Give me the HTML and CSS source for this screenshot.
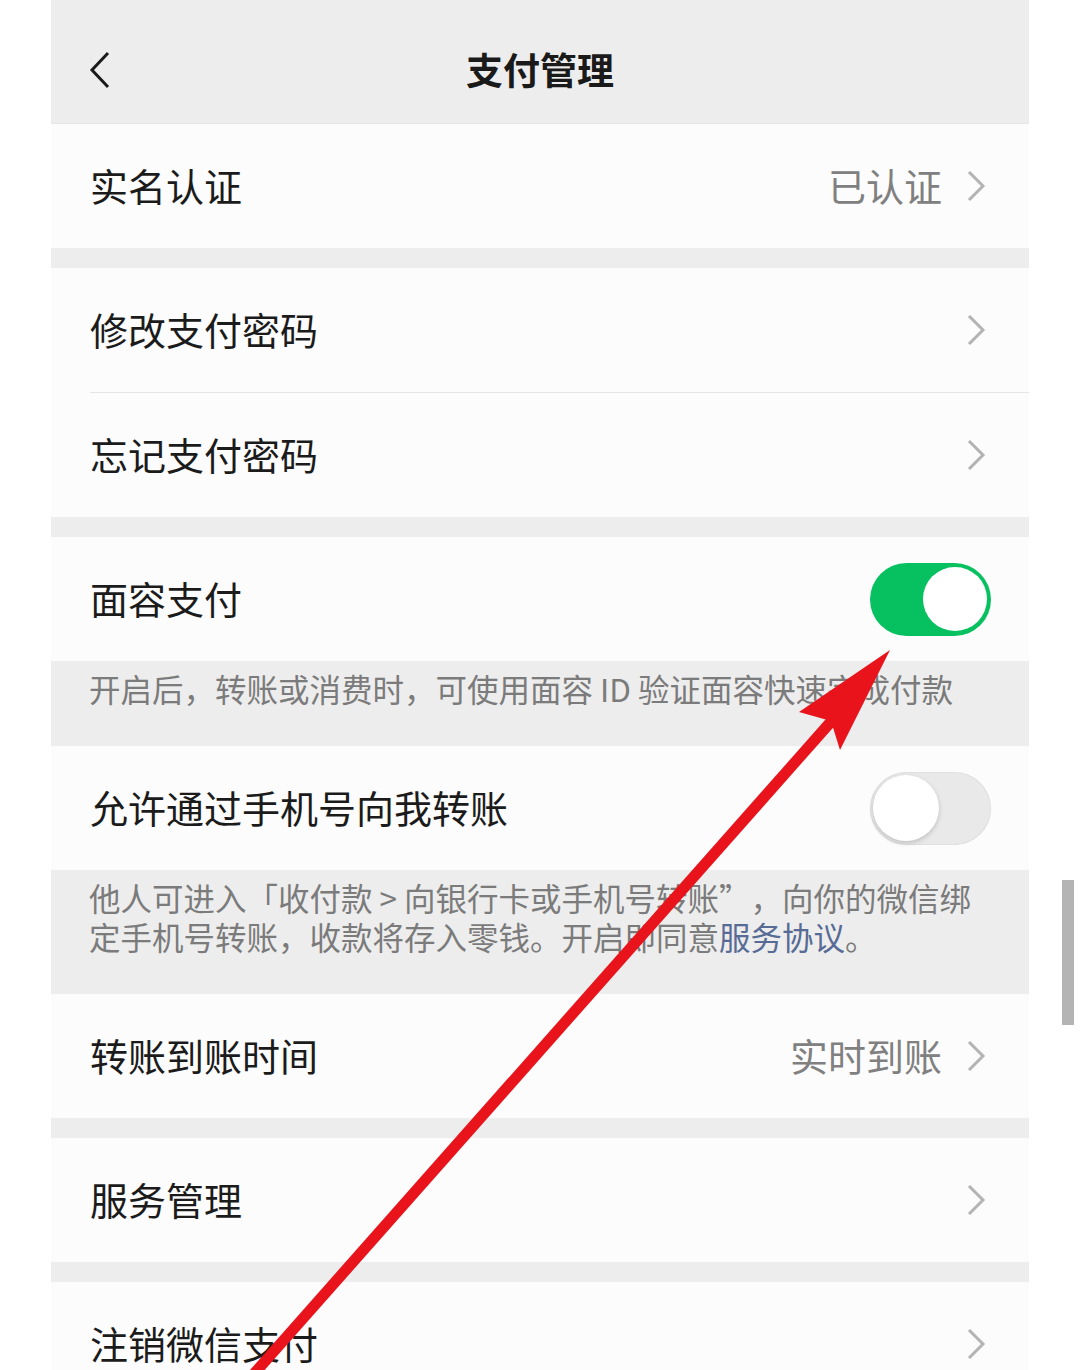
FILE: index.html
```html
<!doctype html>
<html lang="zh-CN">
<head>
  <meta charset="utf-8">
  <title>支付管理</title>
  <link rel="stylesheet" href="styles.css">
</head>
<body>
<div class="page">
  <div class="screen">
    <header class="navBar">
      <svg class="backIcon" width="22" height="38" viewBox="0 0 22 38">
        <polyline points="19,2 3,19 19,36" fill="none" stroke="#1a1a1a" stroke-width="3"/>
      </svg>
      <h1 class="navTitle">支付管理</h1>
      <span></span>
    </header>

    <section class="group">
      <div class="cell">
        <span class="cellLabel">实名认证</span>
        <span class="cellValue">已认证</span>
        <svg class="arrowIcon" width="19" height="32" viewBox="0 0 19 32">
          <polyline points="2,2 16,16 2,30" fill="none" stroke="#b3b3b3" stroke-width="3"/>
        </svg>
      </div>
    </section>

    <section class="group">
      <div class="cell">
        <span class="cellLabel">修改支付密码</span>
        <svg class="arrowIcon" width="19" height="32" viewBox="0 0 19 32">
          <polyline points="2,2 16,16 2,30" fill="none" stroke="#b3b3b3" stroke-width="3"/>
        </svg>
      </div>
      <div class="divider"></div>
      <div class="cell">
        <span class="cellLabel">忘记支付密码</span>
        <svg class="arrowIcon" width="19" height="32" viewBox="0 0 19 32">
          <polyline points="2,2 16,16 2,30" fill="none" stroke="#b3b3b3" stroke-width="3"/>
        </svg>
      </div>
    </section>

    <section class="group">
      <div class="cell">
        <span class="cellLabel">面容支付</span>
        <span class="switch switchOn"><span class="knob"></span></span>
      </div>
      <p class="tips">开启后，转账或消费时，可使用面容 ID 验证面容快速完成付款</p>
      <div class="cell">
        <span class="cellLabel">允许通过手机号向我转账</span>
        <span class="switch"><span class="knob"></span></span>
      </div>
      <p class="tips">他人可进入「收付款 &gt; 向银行卡或手机号转账”，向你的微信绑定手机号转账，收款将存入零钱。开启即同意<a class="link">服务协议</a>。</p>
      <div class="cell">
        <span class="cellLabel">转账到账时间</span>
        <span class="cellValue">实时到账</span>
        <svg class="arrowIcon" width="19" height="32" viewBox="0 0 19 32">
          <polyline points="2,2 16,16 2,30" fill="none" stroke="#b3b3b3" stroke-width="3"/>
        </svg>
      </div>
    </section>

    <section class="group">
      <div class="cell">
        <span class="cellLabel">服务管理</span>
        <svg class="arrowIcon" width="19" height="32" viewBox="0 0 19 32">
          <polyline points="2,2 16,16 2,30" fill="none" stroke="#b3b3b3" stroke-width="3"/>
        </svg>
      </div>
    </section>

    <section class="group">
      <div class="cell">
        <span class="cellLabel">注销微信支付</span>
        <svg class="arrowIcon" width="19" height="32" viewBox="0 0 19 32">
          <polyline points="2,2 16,16 2,30" fill="none" stroke="#b3b3b3" stroke-width="3"/>
        </svg>
      </div>
    </section>
  </div>

  <div class="scrollThumb"></div>

  <!-- red pointer drawn over the page -->
  <svg class="pointer" width="1080" height="1370" viewBox="0 0 1080 1370">
    <line x1="252" y1="1376" x2="836" y2="716" stroke="#e8131b" stroke-width="11"/>
    <polygon points="890,650 799,712 831,721 840,750" fill="#e8131b"/>
  </svg>
</div>
</body>
</html>
```

FILE: styles.css
```css
html, body {
  margin: 0;
  background: #fff;
}

body {
  font-family: "Noto Sans CJK SC", "Noto Sans", sans-serif;
  color: #1b1b1b;
  text-spacing-trim: space-all;
}

.page {
  position: relative;
  width: 1080px;
  height: 1370px;
  overflow: hidden;
}

.screen {
  width: 978px;
  margin-left: 51px;
  background: #ededed;
  min-height: 1370px;
}

.navBar {
  height: 124px;
  display: grid;
  grid-template-columns: 1fr auto 1fr;
  align-items: center;
  padding: 16px 38px 0;
  border-bottom: 1px solid #e6e6e6;
  box-sizing: border-box;
}

.backIcon {
  display: block;
}

.navTitle {
  margin: 0;
  font-size: 37px;
  font-weight: 700;
  color: #1a1a1a;
  line-height: 1;
}

.group {
  background: #fcfcfc;
}

.group + .group {
  margin-top: 20px;
}

.cell {
  height: 124px;
  display: flex;
  align-items: center;
  padding-left: 39px;
  padding-right: 38px;
  box-sizing: border-box;
}

.cellLabel {
  flex: 1;
  font-size: 38px;
  line-height: 1;
  padding-bottom: 3px;
}

.cellValue {
  font-size: 38px;
  line-height: 1;
  color: #808080;
  margin-right: 25px;
  padding-bottom: 3px;
}

.arrowIcon {
  display: block;
  margin-right: 5px;
}

.divider {
  height: 1px;
  margin-left: 39px;
  background: #e6e6e6;
}

.tips {
  margin: 0;
  background: #ededed;
  padding: 8px 50px 38px 38px;
  font-size: 31.5px;
  line-height: 39px;
  color: #7b7b7b;
}

.link {
  color: #576b95;
}

.switch {
  width: 121px;
  height: 73px;
  border-radius: 37px;
  background: #e9e9e9;
  box-shadow: inset 0 0 0 1px #e0e0e0;
  display: flex;
  align-items: center;
  padding: 0 3px;
  box-sizing: border-box;
}

.switch .knob {
  width: 66px;
  height: 66px;
  border-radius: 50%;
  background: #fff;
  box-shadow: 0 2px 5px rgba(0, 0, 0, 0.18);
}

.switchOn {
  background: #07c160;
  box-shadow: none;
  justify-content: flex-end;
  padding: 0 4px;
}

.switchOn .knob {
  width: 64px;
  height: 64px;
  box-shadow: none;
}

.scrollThumb {
  position: absolute;
  left: 1062px;
  top: 880px;
  width: 12px;
  height: 145px;
  background: #b4b4b4;
}

.pointer {
  position: absolute;
  left: 0;
  top: 0;
  pointer-events: none;
}
```
